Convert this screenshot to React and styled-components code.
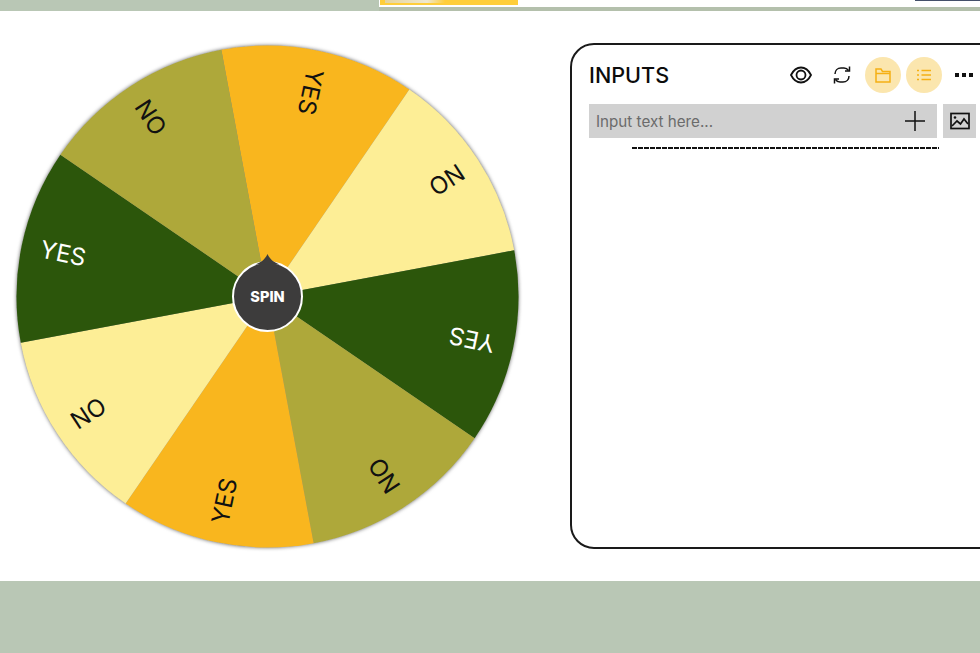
import React from 'react'
import styled, { createGlobalStyle } from 'styled-components'

const CX = 267.5
const CY = 285.5
const R = 251
const START = -10.6

const slices = [
    { label: 'YES', fill: '#f9b61e', ink: '#111' },
    { label: 'NO', fill: '#fdee96', ink: '#111' },
    { label: 'YES', fill: '#2c560b', ink: '#fff' },
    { label: 'NO', fill: '#aea83a', ink: '#111' },
    { label: 'YES', fill: '#f9b61e', ink: '#111' },
    { label: 'NO', fill: '#fdee96', ink: '#111' },
    { label: 'YES', fill: '#2c560b', ink: '#fff' },
    { label: 'NO', fill: '#aea83a', ink: '#111' },
]

const GlobalStyle = createGlobalStyle`
    html, body {
        margin: 0;
        padding: 0;
        background: #fff;
        overflow: hidden;
        font-family: Inter, "Liberation Sans", sans-serif;
    }
`

const Page = styled.div`
    width: 980px;
    height: 653px;
    display: flex;
    flex-direction: column;
    overflow: hidden;
`

const TopStrip = styled.header`
    height: 11px;
    display: flex;
    flex-shrink: 0;
`

const TopLeft = styled.div`
    width: 379px;
    background: #b9c7b5;
`

const TopRight = styled.div`
    flex: 1;
    display: flex;
    flex-direction: column;
    justify-content: space-between;
`

const TopContent = styled.div`
    display: flex;
    justify-content: space-between;
    align-items: flex-start;
`

const Banner = styled.div`
    width: 138px;
    height: 5px;
    margin-left: 1px;
    background: linear-gradient(90deg, #e6d49a 0, #efe8d0 70%, #ffce3a 100%) 5px 0 / 60px 3px no-repeat, #ffce3a;
`

const DarkEdge = styled.div`
    width: 65px;
    height: 1px;
    background: #44506a;
`

const TopLine = styled.div`
    height: 4px;
    background: #b4c0ac;
`

const Main = styled.main`
    flex: 1;
    display: flex;
    align-items: flex-start;
`

const WheelSvg = styled.svg`
    width: 570px;
    height: 570px;
    flex-shrink: 0;
    display: block;
`

const WheelLabel = styled.text`
    font-family: Inter, "Liberation Sans", sans-serif;
    font-size: 24px;
    text-anchor: start;
    dominant-baseline: central;
`

const SpinLabel = styled.text`
    font-family: Inter, "Liberation Sans", sans-serif;
    font-size: 14.5px;
    font-weight: 800;
    fill: #fff;
    text-anchor: middle;
    dominant-baseline: central;
`

const Panel = styled.section`
    width: 440px;
    height: 506px;
    margin-top: 32px;
    flex-shrink: 0;
    box-sizing: border-box;
    border: 2px solid #1a1a1a;
    border-radius: 24px;
    padding: 12px 0 0 17px;
`

const PanelHead = styled.div`
    display: flex;
    align-items: center;
    height: 36px;
    margin-bottom: 11px;
`

const Title = styled.h2`
    margin: 0;
    width: 194px;
    font-size: 21.6px;
    font-weight: 500;
    color: #0c0c0c;
`

const IconSlot = styled.div`
    width: 36px;
    height: 36px;
    margin-right: ${p => p.$gap ?? 5}px;
    border-radius: 50%;
    display: flex;
    align-items: center;
    justify-content: center;
    flex-shrink: 0;
    color: ${p => (p.$active ? '#f5b014' : '#111')};
    background: ${p => (p.$active ? '#fbe6ae' : 'transparent')};
`

const InputRow = styled.div`
    display: flex;
    gap: 6px;
`

const InputBox = styled.div`
    width: 348px;
    height: 34px;
    box-sizing: border-box;
    background: #d1d1d1;
    padding: 0 12px 0 7px;
    display: flex;
    align-items: center;
    justify-content: space-between;
    color: #6b6b6b;
    font-size: 15.2px;
`

const ImageButton = styled.div`
    width: 33px;
    height: 34px;
    background: #d1d1d1;
    display: flex;
    align-items: center;
    justify-content: center;
    flex-shrink: 0;
`

const DashRule = styled.div`
    width: 307px;
    height: 2px;
    margin: 9px 0 0 43px;
    background: repeating-linear-gradient(90deg, #111 0, #111 5px, transparent 5px, transparent 6px);
`

const Footer = styled.footer`
    height: 72px;
    flex-shrink: 0;
    background: #b9c7b5;
`

const polar = (deg, r) => {
    const a = (deg * Math.PI) / 180
    return [CX + r * Math.sin(a), CY - r * Math.cos(a)]
}

const slicePath = i => {
    const [x1, y1] = polar(START + i * 45, R)
    const [x2, y2] = polar(START + (i + 1) * 45, R)
    return `M${CX} ${CY}L${x1} ${y1}A${R} ${R} 0 0 1 ${x2} ${y2}Z`
}

const EyeIcon = () => (
    <svg width="22" height="18" viewBox="0 0 22 18" fill="none" stroke="currentColor" strokeWidth="1.8">
        <path d="M1 9C3.500 4 7 1.500 11 1.500S18.500 4 21 9C18.500 14 15 16.500 11 16.500S3.500 14 1 9Z" />
        <circle cx="11" cy="9" r="4.500" />
    </svg>
)

const SyncIcon = () => (
    <svg width="20" height="20" viewBox="0 0 20 20" fill="none" stroke="currentColor" strokeWidth="1.5">
        <path d="M3 9c0-3.500 2.500-6 6-6h3c2 0 3.500 1 4.500 2.500" />
        <path d="M17.500 1.500v4.500h-4.500" />
        <path d="M17 11c0 3.500-2.500 6-6 6H8c-2 0-3.500-1-4.500-2.500" />
        <path d="M2.500 18.500V14h4.500" />
    </svg>
)

const FolderIcon = () => (
    <svg width="16" height="15" viewBox="0 0 16 15" fill="none" stroke="currentColor" strokeWidth="1.5">
        <path d="M1 1h5l1.500 2.500H15V14H1Z" />
        <path d="M1 5.500h14" />
    </svg>
)

const ListIcon = () => (
    <svg width="14" height="12" viewBox="0 0 14 12" fill="none" stroke="currentColor" strokeWidth="1.4">
        <path d="M0 1.500h2M4.500 1.500H14M0 6h2M4.500 6H14M0 10.500h2M4.500 10.500H14" />
    </svg>
)

const PlusIcon = () => (
    <svg width="20" height="20" viewBox="0 0 20 20" stroke="#111" strokeWidth="1.5">
        <path d="M0 10h20M10 0v20" />
    </svg>
)

const PictureIcon = () => (
    <svg width="20" height="18" viewBox="0 0 20 18" fill="none" stroke="#111" strokeWidth="1.7">
        <rect x="1" y="1.500" width="18" height="15" />
        <circle cx="5" cy="5.500" r="1.300" fill="#111" stroke="none" />
        <path d="M2 14l5-5 3.500 3 3.500-5 4 5" />
    </svg>
)

const DotsIcon = () => (
    <svg width="18" height="4" viewBox="0 0 18 4" fill="currentColor">
        <rect x="0" width="4" height="4" />
        <rect x="7" width="4" height="4" />
        <rect x="14" width="4" height="4" />
    </svg>
)

const Wheel = () => (
    <WheelSvg viewBox="0 0 570 570">
        <defs>
            <filter id="rim" x="-5%" y="-5%" width="110%" height="110%">
                <feDropShadow dx="0" dy="0" stdDeviation="2.200" floodColor="#000" floodOpacity="0.75" />
            </filter>
        </defs>
        <circle cx={CX} cy={CY} r={R - 0.5} fill="#888" filter="url(#rim)" />
        {slices.map((s, i) => (
            <path key={i} d={slicePath(i)} fill={s.fill} />
        ))}
        {slices.map((s, i) => {
            const mid = START + i * 45 + 22.5
            const [x, y] = polar(mid, 232)
            return (
                <WheelLabel key={i} x={x} y={y} fill={s.ink} transform={`rotate(${mid + 90} ${x} ${y})`}>
                    {s.label}
                </WheelLabel>
            )
        })}
        <circle cx={CX} cy={CY} r="34.500" fill="#3d3c3c" stroke="#fff" strokeWidth="2" />
        <path
            d={`M${CX} ${CY - 42.5}C${CX + 2.5} ${CY - 37} ${CX + 6} ${CY - 34.5} ${CX + 12} ${CY - 32}L${CX - 12} ${CY - 32}C${CX - 6} ${CY - 34.5} ${CX - 2.5} ${CY - 37} ${CX} ${CY - 42.5}Z`}
            fill="#3d3c3c"
        />
        <SpinLabel x={CX} y={CY}>SPIN</SpinLabel>
    </WheelSvg>
)

export default function App() {
    return (
        <Page>
            <GlobalStyle />
            <TopStrip>
                <TopLeft />
                <TopRight>
                    <TopContent>
                        <Banner />
                        <DarkEdge />
                    </TopContent>
                    <TopLine />
                </TopRight>
            </TopStrip>
            <Main>
                <Wheel />
                <Panel>
                    <PanelHead>
                        <Title>INPUTS</Title>
                        <IconSlot><EyeIcon /></IconSlot>
                        <IconSlot><SyncIcon /></IconSlot>
                        <IconSlot $active><FolderIcon /></IconSlot>
                        <IconSlot $active $gap={4}><ListIcon /></IconSlot>
                        <IconSlot><DotsIcon /></IconSlot>
                    </PanelHead>
                    <InputRow>
                        <InputBox>
                            Input text here...
                            <PlusIcon />
                        </InputBox>
                        <ImageButton><PictureIcon /></ImageButton>
                    </InputRow>
                    <DashRule />
                </Panel>
            </Main>
            <Footer />
        </Page>
    )
}
